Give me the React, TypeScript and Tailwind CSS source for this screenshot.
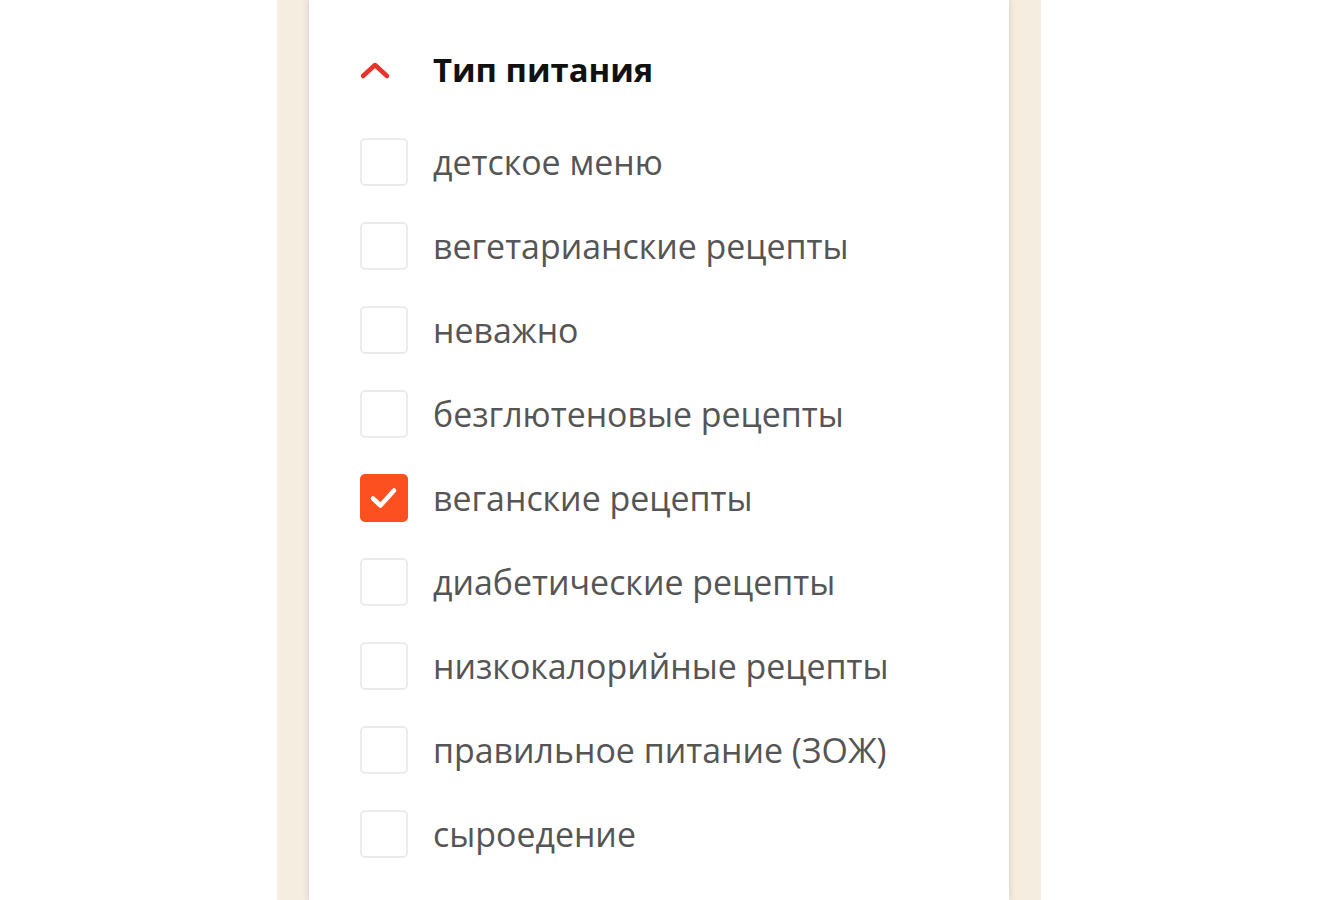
import React from "react";

const items = [
  { label: "детское меню", checked: false },
  { label: "вегетарианские рецепты", checked: false },
  { label: "неважно", checked: false },
  { label: "безглютеновые рецепты", checked: false },
  { label: "веганские рецепты", checked: true },
  { label: "диабетические рецепты", checked: false },
  { label: "низкокалорийные рецепты", checked: false },
  { label: "правильное питание (ЗОЖ)", checked: false },
  { label: "сыроедение", checked: false },
];

export default function App() {
  return (
    <div className="w-[1318px] h-[900px] bg-white overflow-hidden flex pl-[277px]" style={{ fontFamily: '"Open Sans", "Noto Sans", sans-serif' }}>
      <div className="w-[32px] h-full bg-[#f4ede0]" />
      <div className="w-[700px] h-full bg-white shadow-[0_0_6px_rgba(120,100,60,0.25)] relative z-10 pl-[51px]">
        <div className="flex items-center h-[40px] mt-[50px]">
          <svg width="32" height="20" viewBox="0 0 32 20" className="ml-[-1px]">
            <path d="M4 16 L16 5 L28 16" fill="none" stroke="#e8332c" strokeWidth="4.5" strokeLinecap="round" strokeLinejoin="round" />
          </svg>
          <span className="ml-[42px] text-[32.8px] font-bold text-[#111] leading-none">Тип питания</span>
        </div>
        <div className="mt-[30px] flex flex-col">
          {items.map((it) => (
            <div key={it.label} className="h-[84px] flex items-center">
              {it.checked ? (
                <div className="w-[48px] h-[48px] rounded-[5px] bg-[#fc5020] flex items-center justify-center">
                  <svg width="32" height="26" viewBox="0 0 32 26">
                    <path d="M5 13.5 L12.5 20.5 L26 5.5" fill="none" stroke="#fff" strokeWidth="4.5" strokeLinecap="round" strokeLinejoin="round" />
                  </svg>
                </div>
              ) : (
                <div className="w-[48px] h-[48px] rounded-[5px] border-2 border-[#ebebeb] bg-white" />
              )}
              <span className="ml-[25px] mt-[2px] text-[33.9px] text-[#555] leading-none">{it.label}</span>
            </div>
          ))}
        </div>
      </div>
      <div className="w-[32px] h-full bg-[#f4ede0]" />
    </div>
  );
}
